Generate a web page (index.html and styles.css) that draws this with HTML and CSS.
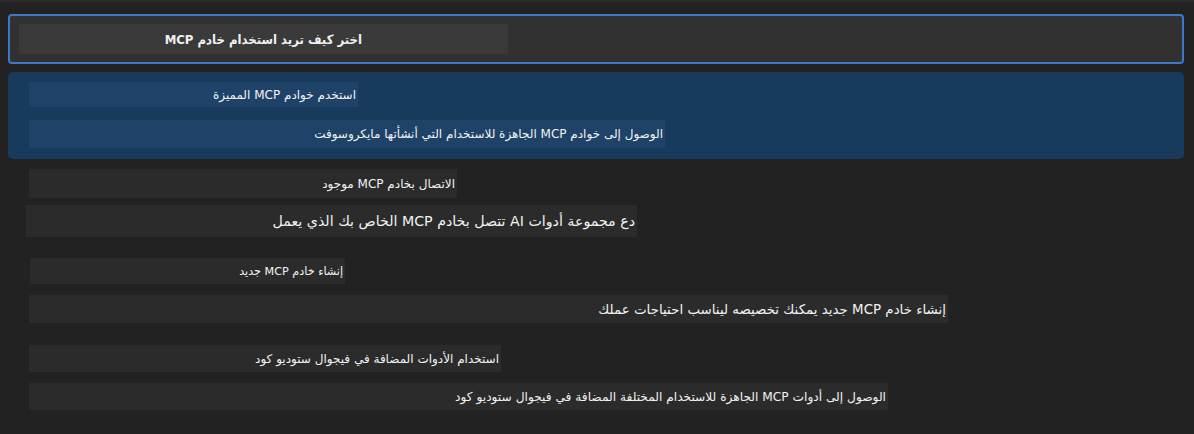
FILE: index.html
```html
<!DOCTYPE html>
<html lang="ar">
<head>
<meta charset="utf-8">
<title>MCP</title>
<link rel="stylesheet" href="styles.css">
</head>
<body>
<div class="topline"></div>
<div class="panel">
  <div class="input">
    <div class="box placeholder">اختر كيف تريد استخدام خادم MCP</div>
  </div>
  <div class="list">
    <div class="item selected">
      <div class="box label w1">استخدم خوادم MCP المميزة</div>
      <div class="box desc d1">الوصول إلى خوادم MCP الجاهزة للاستخدام التي أنشأتها مايكروسوفت</div>
    </div>
    <div class="item i2">
      <div class="box label w2">الاتصال بخادم MCP موجود</div>
      <div class="box desc big d2">دع مجموعة أدوات AI تتصل بخادم MCP الخاص بك الذي يعمل</div>
    </div>
    <div class="item i3">
      <div class="box label w3">إنشاء خادم MCP جديد</div>
      <div class="box desc d3">إنشاء خادم MCP جديد يمكنك تخصيصه ليناسب احتياجات عملك</div>
    </div>
    <div class="item i4">
      <div class="box label w4">استخدام الأدوات المضافة في فيجوال ستوديو كود</div>
      <div class="box desc d4">الوصول إلى أدوات MCP الجاهزة للاستخدام المختلفة المضافة في فيجوال ستوديو كود</div>
    </div>
  </div>
</div>
</body>
</html>
```
FILE: styles.css
```css
html, body {
  margin: 0;
  padding: 0;
  background: #222222;
  width: 1194px;
  height: 434px;
  overflow: hidden;
  font-family: "DejaVu Sans", "Noto Sans", sans-serif;
  color: #e8e8e8;
}

.topline {
  height: 2px;
  background: #2b2b2b;
}

.panel {
  padding: 12px 10px 0 8px;
}

.input {
  border: 2px solid #3c79c6;
  border-radius: 4px;
  background: #313131;
  padding: 8px 9px;
  box-sizing: content-box;
  height: 30px;
}

.box {
  direction: rtl;
  text-align: right;
  white-space: nowrap;
  box-sizing: border-box;
  display: flex;
  align-items: center;
  justify-content: flex-start;
}

.placeholder {
  width: 489px;
  height: 30px;
  background: #3a3a3a;
  padding-right: 146px;
  font-family: "DejaVu Sans Condensed", "DejaVu Sans", sans-serif;
  font-size: 13px;
  font-weight: bold;
  color: #f0f0f0;
}

.list {
  margin-top: 8px;
}

.item {
  display: flex;
  flex-direction: column;
  align-items: flex-start;
}

.selected {
  background: #183a5c;
  border-radius: 5px;
  height: 87px;
  box-sizing: border-box;
  padding-top: 10px;
}

.label, .desc {
  font-size: 12px;
  color: #f2f2f2;
  padding-right: 2px;
  background: #2b2b2b;
}

.selected .box {
  background: #1f4268;
}

.big {
  font-size: 14.2px;
}

.w1 { width: 329px; height: 25px; margin-left: 21px; }
.d1 { width: 636px; height: 28px; margin-left: 21px; margin-top: 13px; }

.i2 { padding-top: 10px; }
.w2 { width: 428px; height: 29px; margin-left: 21px; }
.d2 { width: 611px; height: 32px; margin-left: 18px; margin-top: 7px; }

.i3 { padding-top: 21px; }
.w3 { width: 315px; height: 26px; margin-left: 22px; font-size: 11.2px; }
.d3 { width: 919px; height: 28px; margin-left: 21px; margin-top: 11px; font-size: 13.4px; }

.i4 { padding-top: 22px; }
.w4 { width: 472px; height: 27px; margin-left: 21px; }
.d4 { width: 859px; height: 27px; margin-left: 21px; margin-top: 11px; font-size: 12.2px; }
```
